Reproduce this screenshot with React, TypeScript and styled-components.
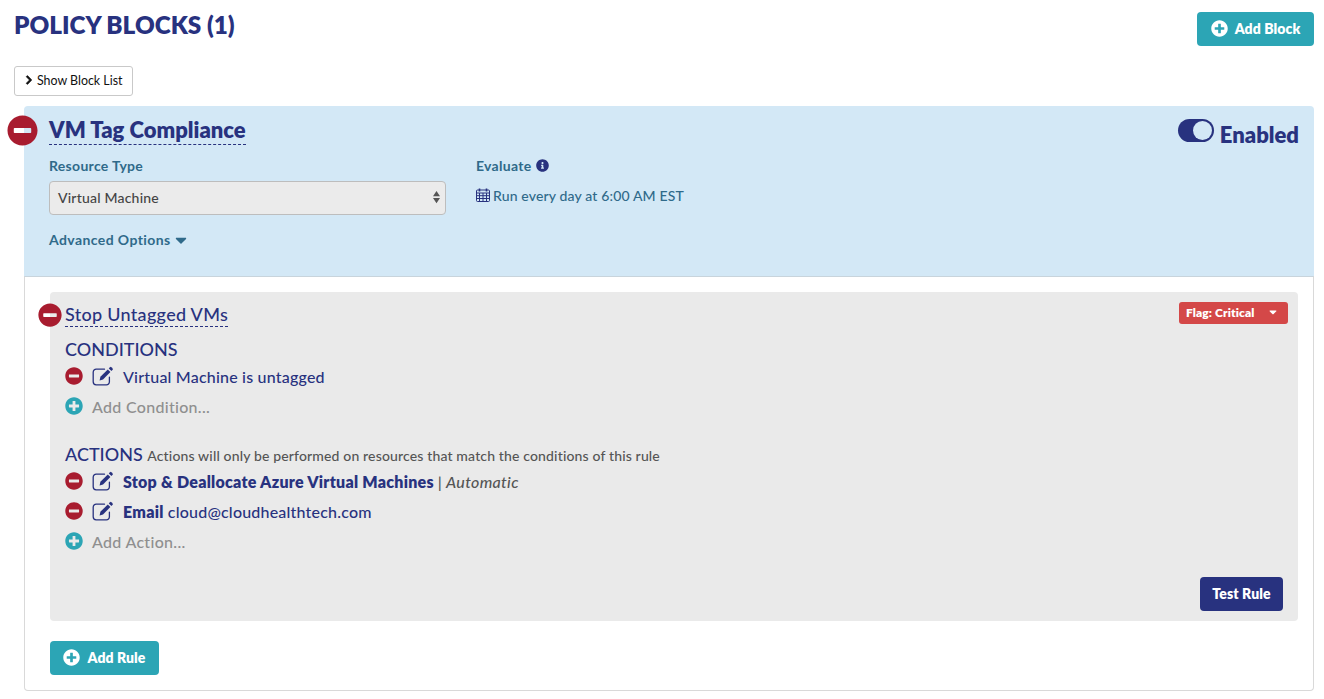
import React from 'react';
import styled, { createGlobalStyle } from 'styled-components';
import {
  FaCaretDown,
  FaChevronRight,
  FaInfoCircle,
  FaMinusCircle,
  FaPlusCircle,
} from 'react-icons/fa';

const navy = '#28327f';
const teal = '#2ca5b5';
const slate = '#2f6a8a';
const red = '#a81c2f';

const GlobalStyle = createGlobalStyle`
  html, body {
    margin: 0;
    padding: 0;
    background: #ffffff;
    font-family: 'Lato', 'Liberation Sans', sans-serif;
    color: ${navy};
  }
`;

const Page = styled.div`
  width: 1324px;
  height: 699px;
  box-sizing: border-box;
  padding: 12px 10px 0 14px;
  overflow: hidden;
`;

const PageHeader = styled.header`
  display: flex;
  justify-content: space-between;
  align-items: flex-start;
  height: 54px;
`;

const PageTitle = styled.h1`
  margin: 0;
  font-size: 24.3px;
  line-height: 26px;
  font-weight: 800;
  color: ${navy};
`;

const SolidButton = styled.button<{ $tone?: string; $width: number }>`
  display: flex;
  align-items: center;
  justify-content: center;
  gap: 7px;
  width: ${(p) => p.$width}px;
  height: 34px;
  padding: 0 0 1px;
  border: 0;
  border-radius: 4px;
  background: ${(p) => p.$tone || teal};
  color: #ffffff;
  font: 800 14px 'Lato', sans-serif;
  letter-spacing: 0.1px;
  svg {
    font-size: 17px;
  }
`;

const ListToggle = styled.button`
  display: flex;
  align-items: center;
  gap: 3px;
  width: 119px;
  height: 30px;
  box-sizing: border-box;
  padding: 0 0 2px 9px;
  background: #ffffff;
  border: 1px solid #c9c9c9;
  border-radius: 3px;
  color: #111111;
  font: 400 12.4px 'Lato', sans-serif;
  svg {
    font-size: 10px;
    stroke: #111111;
    stroke-width: 40px;
  }
`;

const Block = styled.section`
  margin: 10px 0 0 10px;
`;

const BlockHead = styled.div`
  position: relative;
  display: flex;
  justify-content: space-between;
  height: 170px;
  box-sizing: border-box;
  padding: 9px 15px 0 25px;
  background: #d3e8f6;
  border-radius: 4px 4px 0 0;
`;

const RemoveIcon = styled(FaMinusCircle)<{ $size: number }>`
  flex: none;
  width: ${(p) => p.$size}px;
  height: ${(p) => p.$size}px;
  color: ${red};
`;

const BlockRemove = styled.span`
  position: absolute;
  left: -17px;
  top: 9px;
  display: flex;
`;

const BlockName = styled.h2`
  display: inline-block;
  margin: 0;
  padding-top: 1px;
  font-size: 22px;
  line-height: 28px;
  font-weight: 800;
  color: ${navy};
  border-bottom: 1px dashed ${navy};
`;

const FieldRow = styled.div`
  display: flex;
  gap: 30px;
  margin-top: 11px;
`;

const Field = styled.div<{ $width?: number }>`
  width: ${(p) => (p.$width ? `${p.$width}px` : 'auto')};
`;

const Label = styled.div`
  display: flex;
  align-items: center;
  gap: 4px;
  height: 18px;
  font-size: 14px;
  font-weight: 700;
  letter-spacing: 0.3px;
  color: ${slate};
  svg {
    color: ${navy};
    font-size: 13px;
  }
`;

const SelectBox = styled.div`
  display: flex;
  align-items: center;
  justify-content: space-between;
  height: 34px;
  box-sizing: border-box;
  margin-top: 7px;
  padding: 0 5px 2px 8px;
  background: #ebebeb;
  border: 1px solid #bdbdbd;
  border-radius: 4px;
  font-size: 14px;
  font-weight: 500;
  letter-spacing: 0.2px;
  color: #444444;
`;

const Schedule = styled.div`
  display: flex;
  align-items: center;
  gap: 3px;
  height: 28px;
  margin-top: 7px;
  font-size: 14px;
  font-weight: 500;
  letter-spacing: 0.15px;
  color: ${slate};
`;

const AdvancedLink = styled.div`
  display: flex;
  align-items: center;
  gap: 1px;
  margin-top: 16px;
  font-size: 14px;
  line-height: 18px;
  font-weight: 700;
  letter-spacing: 0.4px;
  color: ${slate};
  svg {
    font-size: 18px;
  }
`;

const EnabledSwitch = styled.div`
  display: flex;
  gap: 6px;
  height: 34px;
  margin-top: 5px;
  font-size: 22px;
  line-height: 30px;
  font-weight: 800;
  color: ${navy};
`;

const SwitchTrack = styled.span`
  position: relative;
  width: 36px;
  height: 23px;
  box-sizing: border-box;
  margin-top: -1px;
  background: ${navy};
  border-radius: 12px;
`;

const SwitchKnob = styled.span`
  position: absolute;
  right: 2px;
  top: 2px;
  width: 19px;
  height: 19px;
  background: #d3e8f6;
  border-radius: 50%;
`;

const BlockBody = styled.div`
  height: 415px;
  box-sizing: border-box;
  padding: 15px 15px 0 25px;
  background: #ffffff;
  border: 1px solid #d9d9d9;
  border-top-color: #c8d4dc;
  border-radius: 0 0 4px 4px;
`;

const RuleCard = styled.div`
  position: relative;
  height: 329px;
  box-sizing: border-box;
  padding: 10px 10px 0 15px;
  background: #eaeaea;
  border-radius: 4px;
  margin-bottom: 20px;
`;

const RuleRemove = styled.span`
  position: absolute;
  left: -12px;
  top: 11px;
  display: flex;
`;

const RuleHead = styled.div`
  display: flex;
  justify-content: space-between;
  align-items: flex-start;
`;

const RuleName = styled.h3`
  margin: 0;
  font-size: 18px;
  line-height: 24px;
  font-weight: 500;
  letter-spacing: 0.3px;
  color: ${navy};
  border-bottom: 1px dashed ${navy};
`;

const FlagButton = styled.div`
  display: flex;
  align-items: center;
  justify-content: space-between;
  width: 109px;
  height: 22px;
  box-sizing: border-box;
  padding: 0 9px 2px 7px;
  background: #d44848;
  border-radius: 3px;
  color: #ffffff;
  font-size: 12px;
  font-weight: 800;
  letter-spacing: 0.1px;
  svg {
    font-size: 12px;
  }
`;

const SectionTitle = styled.div<{ $gap: number; $after?: number }>`
  margin-top: ${(p) => p.$gap}px;
  margin-bottom: ${(p) => p.$after || 0}px;
  font-size: 18px;
  line-height: 24px;
  font-weight: 500;
  color: ${navy};
`;

const SectionNote = styled.span`
  font-size: 14px;
  font-weight: 500;
  letter-spacing: 0.15px;
  color: #555555;
`;

const ItemRow = styled.div`
  display: flex;
  align-items: center;
  height: 30px;
  font-size: 16px;
  font-weight: 500;
  letter-spacing: 0.2px;
  color: ${navy};
  strong {
    font-weight: 800;
    letter-spacing: 0.25px;
  }
`;

const EditGlyph = styled.svg`
  flex: none;
  width: 22px;
  height: 20px;
  margin: 0 9px;
  color: ${navy};
`;

const AddIcon = styled(FaPlusCircle)`
  flex: none;
  width: 18px;
  height: 18px;
  margin-right: 9px;
  color: ${teal};
`;

const AddText = styled.span`
  color: #8f8f8f;
  letter-spacing: 0.3px;
`;

const Muted = styled.em`
  color: #555555;
  letter-spacing: 0.3px;
`;

const Divider = styled.span`
  margin: 0 4px;
  color: #555555;
`;

const TestRow = styled.div`
  position: absolute;
  right: 15px;
  bottom: 10px;
`;

const EditIcon = () => (
  <EditGlyph viewBox="0 0 22 20" fill="none">
    <path
      d="M12.5 3.2H4.2A3 3 0 0 0 1.2 6.2v9.6a3 3 0 0 0 3 3h10.2a3 3 0 0 0 3-3v-4.6"
      stroke="currentColor"
      strokeWidth="1.3"
      strokeLinecap="round"
    />
    <path d="M8.4 10.8 15.8 3.4 18.4 6 11 13.4 7.6 14.4z" fill="currentColor" />
    <path d="M16.8 2.4 18 1.2a1 1 0 0 1 1.4 0l1.2 1.2a1 1 0 0 1 0 1.4L19.4 5z" fill="currentColor" />
  </EditGlyph>
);

const CalendarIcon = () => (
  <svg width="14" height="14" viewBox="0 0 14 14" fill="none" stroke={navy} strokeWidth="1">
    <rect x="0.5" y="2" width="13" height="11.5" rx="1" />
    <path d="M0.5 5h13M0.5 7.7h13M0.5 10.5h13M3.5 5v8.5M7 5v8.5M10.5 5v8.5" />
    <path d="M3.5 0.5v3M10.5 0.5v3" strokeWidth="1.6" />
  </svg>
);

const SortArrows = () => (
  <svg width="7" height="14" viewBox="0 0 8 14" fill="#555555">
    <path d="M4 0l4 6H0zM4 14L0 8h8z" />
  </svg>
);

const conditions = ['Virtual Machine is untagged'];

export default function App() {
  return (
    <Page>
      <GlobalStyle />
      <PageHeader>
        <PageTitle>POLICY BLOCKS (1)</PageTitle>
        <SolidButton $width={117}>
          <FaPlusCircle />
          Add Block
        </SolidButton>
      </PageHeader>
      <ListToggle>
        <FaChevronRight />
        Show Block List
      </ListToggle>
      <Block>
        <BlockHead>
          <BlockRemove>
            <RemoveIcon $size={31} />
          </BlockRemove>
          <div>
            <BlockName>VM Tag Compliance</BlockName>
            <FieldRow>
              <Field $width={397}>
                <Label>Resource Type</Label>
                <SelectBox>
                  Virtual Machine
                  <SortArrows />
                </SelectBox>
              </Field>
              <Field>
                <Label>
                  Evaluate <FaInfoCircle />
                </Label>
                <Schedule>
                  <CalendarIcon />
                  Run every day at 6:00 AM EST
                </Schedule>
              </Field>
            </FieldRow>
            <AdvancedLink>
              Advanced Options
              <FaCaretDown />
            </AdvancedLink>
          </div>
          <EnabledSwitch>
            <SwitchTrack>
              <SwitchKnob />
            </SwitchTrack>
            Enabled
          </EnabledSwitch>
        </BlockHead>
        <BlockBody>
          <RuleCard>
            <RuleRemove>
              <RemoveIcon $size={24} />
            </RuleRemove>
            <RuleHead>
              <RuleName>Stop Untagged VMs</RuleName>
              <FlagButton>
                Flag: Critical
                <FaCaretDown />
              </FlagButton>
            </RuleHead>
            <SectionTitle $gap={10}>CONDITIONS</SectionTitle>
            {conditions.map((text) => (
              <ItemRow key={text}>
                <RemoveIcon $size={18} />
                <EditIcon />
                {text}
              </ItemRow>
            ))}
            <ItemRow>
              <AddIcon />
              <AddText>Add Condition...</AddText>
            </ItemRow>
            <SectionTitle $gap={21} $after={-2}>
              ACTIONS <SectionNote>Actions will only be performed on resources that match the conditions of this rule</SectionNote>
            </SectionTitle>
            <ItemRow>
              <RemoveIcon $size={18} />
              <EditIcon />
              <strong>Stop &amp; Deallocate Azure Virtual Machines</strong>
              <Divider>|</Divider>
              <Muted>Automatic</Muted>
            </ItemRow>
            <ItemRow>
              <RemoveIcon $size={18} />
              <EditIcon />
              <strong>Email</strong>&nbsp;cloud@cloudhealthtech.com
            </ItemRow>
            <ItemRow>
              <AddIcon />
              <AddText>Add Action...</AddText>
            </ItemRow>
            <TestRow>
              <SolidButton $width={83} $tone={navy}>Test Rule</SolidButton>
            </TestRow>
          </RuleCard>
          <SolidButton $width={109}>
            <FaPlusCircle />
            Add Rule
          </SolidButton>
        </BlockBody>
      </Block>
    </Page>
  );
}
